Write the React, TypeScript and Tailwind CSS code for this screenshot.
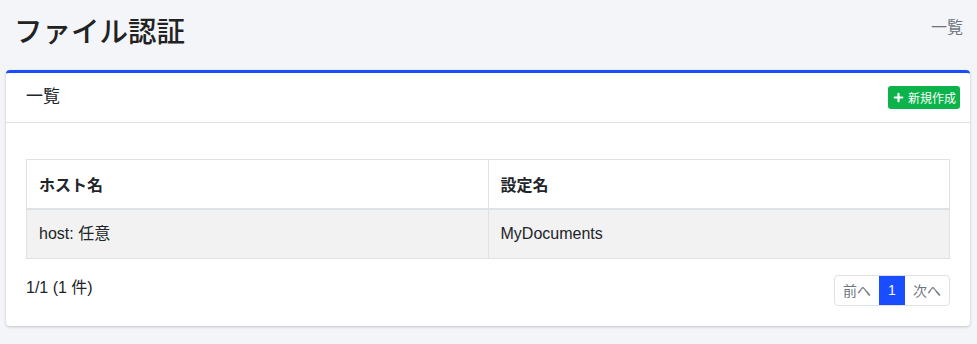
import { Plus } from "lucide-react";

const rows = [{ host: "host: 任意", name: "MyDocuments" }];

export default function App() {
  return (
    <div className="min-h-[344px] bg-[#f4f5f9] text-[#212529] font-['Liberation_Sans','Noto_Sans_CJK_JP',sans-serif]">
      {/* Page header */}
      <div className="flex items-center justify-between h-[60px] pl-[14px] pr-[14px]">
        <h1 className="text-[28.5px] font-medium leading-none font-['Noto_Sans_CJK_JP',sans-serif] text-[#222]">
          ファイル認証
        </h1>
        <span className="text-[16px] text-[#6c757d] font-['Noto_Sans_CJK_JP',sans-serif] -mt-[9px]">一覧</span>
      </div>

      {/* Card */}
      <div className="mx-[6px] mt-[10px] mr-[7px] bg-white rounded-[4px] border-t-[3px] border-[#1a4dff] shadow-[0_1px_3px_rgba(0,0,0,0.2)]">
        <div className="flex items-center justify-between h-[50px] pl-5 pr-[10px] border-b border-[#e0e0e0]">
          <span className="text-[17px] font-['Noto_Sans_CJK_JP',sans-serif] -mt-[6px]">一覧</span>
          <button className="flex items-center gap-[3px] h-[23px] pl-[4px] pr-[4px] rounded-[3px] bg-[#0bb34a] text-white text-[12px] font-['Noto_Sans_CJK_JP',sans-serif]">
            <Plus size={13} strokeWidth={4} />
            新規作成
          </button>
        </div>

        <div className="px-5 pt-[36px] pb-[20px]">
          <table className="w-full border-collapse text-[16px]">
            <thead>
              <tr className="h-[49px]">
                <th className="w-1/2 border border-[#dee2e6] border-b-2 px-3 text-left font-bold font-['Noto_Sans_CJK_JP',sans-serif]">
                  ホスト名
                </th>
                <th className="border border-[#dee2e6] border-b-2 px-3 text-left font-bold font-['Noto_Sans_CJK_JP',sans-serif]">
                  設定名
                </th>
              </tr>
            </thead>
            <tbody>
              {rows.map((r) => (
                <tr key={r.name} className="h-[50px] bg-[#f2f2f2]">
                  <td className="border border-[#dee2e6] px-3">{r.host}</td>
                  <td className="border border-[#dee2e6] px-3">{r.name}</td>
                </tr>
              ))}
            </tbody>
          </table>

          <div className="flex items-start justify-between mt-[16px]">
            <span className="text-[16px] mt-[1px]">1/1 (1 件)</span>
            <div className="flex h-[31px] text-[14px] rounded-[4px] border border-[#dee2e6] overflow-hidden font-['Noto_Sans_CJK_JP',sans-serif]">
              <span className="flex items-center justify-center w-[44px] text-[#6c757d]">前へ</span>
              <span className="flex items-center justify-center w-[26px] bg-[#1a4dff] text-white font-['Liberation_Sans',sans-serif]">1</span>
              <span className="flex items-center justify-center w-[44px] text-[#6c757d]">次へ</span>
            </div>
          </div>
        </div>
      </div>
    </div>
  );
}
